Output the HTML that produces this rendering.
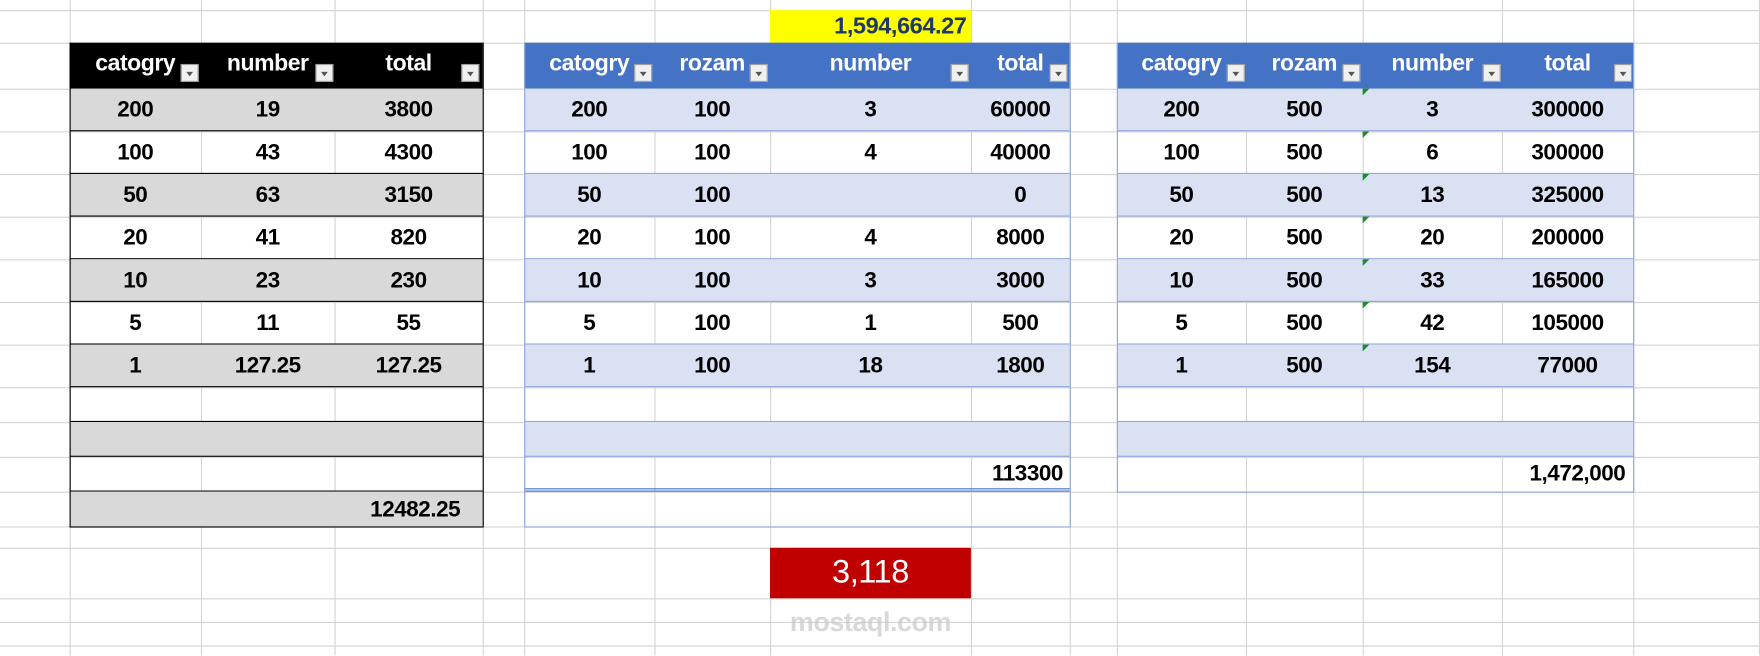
<!DOCTYPE html>
<html><head><meta charset="utf-8"><style>
html,body{margin:0;padding:0;background:#fff;overflow:hidden}
#w{position:absolute;left:0;top:0;width:1568px;height:584px;transform:scale(1.12245);transform-origin:0 0;font-family:"Liberation Sans",sans-serif}
.v{position:absolute;top:0;width:1px;height:584px;background:#d4d4d4}
.h{position:absolute;left:0;width:1568px;height:1px;background:#d4d4d4}
.r{position:absolute;box-sizing:border-box}
.c{position:absolute;display:flex;align-items:center;justify-content:center;font-weight:bold;font-size:20px;color:#000;letter-spacing:-0.4px}
.hd{color:#fff;font-size:20.5px;padding-bottom:3px;box-sizing:border-box}
.f{position:absolute;width:16px;height:16px;background:#f0f0f0;border:1px solid #a0a0a0;box-sizing:border-box}
.f:after{content:"";position:absolute;left:4px;top:6px;border-left:3.5px solid transparent;border-right:3.5px solid transparent;border-top:4px solid #555}
.g{position:absolute;width:0;height:0;border-top:6px solid #1e8c2e;border-right:6px solid transparent}
</style></head><body><div id="w">
<div class="v" style="left:62px"></div><div class="v" style="left:179px"></div><div class="v" style="left:298px"></div><div class="v" style="left:430px"></div><div class="v" style="left:467px"></div><div class="v" style="left:583px"></div><div class="v" style="left:686px"></div><div class="v" style="left:865px"></div><div class="v" style="left:953px"></div><div class="v" style="left:995px"></div><div class="v" style="left:1110px"></div><div class="v" style="left:1214px"></div><div class="v" style="left:1338px"></div><div class="v" style="left:1455px"></div><div class="v" style="left:1567px"></div>
<div class="h" style="top:9px"></div><div class="h" style="top:38px"></div><div class="h" style="top:79px"></div><div class="h" style="top:117px"></div><div class="h" style="top:155px"></div><div class="h" style="top:193px"></div><div class="h" style="top:231px"></div><div class="h" style="top:269px"></div><div class="h" style="top:307px"></div><div class="h" style="top:345px"></div><div class="h" style="top:376px"></div><div class="h" style="top:407px"></div><div class="h" style="top:438px"></div><div class="h" style="top:469px"></div><div class="h" style="top:488px"></div><div class="h" style="top:533px"></div><div class="h" style="top:554px"></div><div class="h" style="top:575px"></div>

<div class="r" style="left:686px;top:9px;width:179px;height:29px;background:#ffff00"></div>
<div class="c" style="left:686px;top:9px;width:175px;height:29px;justify-content:flex-end;color:#203864;font-size:21px">1,594,664.27</div>

<!-- TABLE 1 -->
<div class="r" style="left:62px;top:38px;width:368px;height:41px;background:#000"></div>
<div class="r" style="left:62px;top:79px;width:368px;height:38px;background:#d9d9d9;border-bottom:1px solid #000"></div>
<div class="r" style="left:62px;top:117px;width:368px;height:38px;border-bottom:1px solid #000"></div>
<div class="r" style="left:62px;top:155px;width:368px;height:38px;background:#d9d9d9;border-bottom:1px solid #000"></div>
<div class="r" style="left:62px;top:193px;width:368px;height:38px;border-bottom:1px solid #000"></div>
<div class="r" style="left:62px;top:231px;width:368px;height:38px;background:#d9d9d9;border-bottom:1px solid #000"></div>
<div class="r" style="left:62px;top:269px;width:368px;height:38px;border-bottom:1px solid #000"></div>
<div class="r" style="left:62px;top:307px;width:368px;height:38px;background:#d9d9d9;border-bottom:1px solid #000"></div>
<div class="r" style="left:62px;top:345px;width:368px;height:31px;border-bottom:1px solid #000"></div>
<div class="r" style="left:62px;top:376px;width:368px;height:31px;background:#d9d9d9;border-bottom:1px solid #000"></div>
<div class="r" style="left:62px;top:407px;width:368px;height:31px;border-bottom:1px solid #000"></div>
<div class="r" style="left:62px;top:438px;width:368px;height:32px;background:#d9d9d9;border-bottom:1px solid #000"></div>
<div class="r" style="left:62px;top:38px;width:369px;height:432px;border-left:1px solid #000;border-right:1px solid #000"></div>
<div class="c hd" style="left:62px;top:38px;width:117px;height:41px">catogry</div>
<div class="c hd" style="left:179px;top:38px;width:119px;height:41px">number</div>
<div class="c hd" style="left:298px;top:38px;width:132px;height:41px">total</div>
<div class="f" style="left:161px;top:57px"></div><div class="f" style="left:281px;top:57px"></div><div class="f" style="left:411px;top:57px"></div>
<div class="c" style="left:62px;top:79px;width:117px;height:38px">200</div><div class="c" style="left:179px;top:79px;width:119px;height:38px">19</div><div class="c" style="left:298px;top:79px;width:132px;height:38px">3800</div>
<div class="c" style="left:62px;top:117px;width:117px;height:38px">100</div><div class="c" style="left:179px;top:117px;width:119px;height:38px">43</div><div class="c" style="left:298px;top:117px;width:132px;height:38px">4300</div>
<div class="c" style="left:62px;top:155px;width:117px;height:38px">50</div><div class="c" style="left:179px;top:155px;width:119px;height:38px">63</div><div class="c" style="left:298px;top:155px;width:132px;height:38px">3150</div>
<div class="c" style="left:62px;top:193px;width:117px;height:38px">20</div><div class="c" style="left:179px;top:193px;width:119px;height:38px">41</div><div class="c" style="left:298px;top:193px;width:132px;height:38px">820</div>
<div class="c" style="left:62px;top:231px;width:117px;height:38px">10</div><div class="c" style="left:179px;top:231px;width:119px;height:38px">23</div><div class="c" style="left:298px;top:231px;width:132px;height:38px">230</div>
<div class="c" style="left:62px;top:269px;width:117px;height:38px">5</div><div class="c" style="left:179px;top:269px;width:119px;height:38px">11</div><div class="c" style="left:298px;top:269px;width:132px;height:38px">55</div>
<div class="c" style="left:62px;top:307px;width:117px;height:38px">1</div><div class="c" style="left:179px;top:307px;width:119px;height:38px">127.25</div><div class="c" style="left:298px;top:307px;width:132px;height:38px">127.25</div>
<div class="c" style="left:298px;top:438px;width:112px;height:32px;justify-content:flex-end">12482.25</div>

<!-- TABLE 2 -->
<div class="r" style="left:467px;top:38px;width:486px;height:41px;background:#4472c4"></div>
<div class="r" style="left:467px;top:79px;width:486px;height:38px;background:#d9e1f2;border-bottom:1px solid #8ea9db"></div>
<div class="r" style="left:467px;top:117px;width:486px;height:38px;border-bottom:1px solid #8ea9db"></div>
<div class="r" style="left:467px;top:155px;width:486px;height:38px;background:#d9e1f2;border-bottom:1px solid #8ea9db"></div>
<div class="r" style="left:467px;top:193px;width:486px;height:38px;border-bottom:1px solid #8ea9db"></div>
<div class="r" style="left:467px;top:231px;width:486px;height:38px;background:#d9e1f2;border-bottom:1px solid #8ea9db"></div>
<div class="r" style="left:467px;top:269px;width:486px;height:38px;border-bottom:1px solid #8ea9db"></div>
<div class="r" style="left:467px;top:307px;width:486px;height:38px;background:#d9e1f2;border-bottom:1px solid #8ea9db"></div>
<div class="r" style="left:467px;top:345px;width:486px;height:31px;border-bottom:1px solid #8ea9db"></div>
<div class="r" style="left:467px;top:376px;width:486px;height:31px;background:#d9e1f2;border-bottom:1px solid #8ea9db"></div>
<div class="r" style="left:467px;top:407px;width:486px;height:31px;border-bottom:3px double #4472c4"></div>
<div class="r" style="left:467px;top:438px;width:486px;height:32px;border-bottom:1px solid #8ea9db"></div>
<div class="r" style="left:467px;top:38px;width:487px;height:432px;border-left:1px solid #8ea9db;border-right:1px solid #8ea9db"></div>
<div class="c hd" style="left:467px;top:38px;width:116px;height:41px">catogry</div>
<div class="c hd" style="left:583px;top:38px;width:103px;height:41px">rozam</div>
<div class="c hd" style="left:686px;top:38px;width:179px;height:41px">number</div>
<div class="c hd" style="left:865px;top:38px;width:88px;height:41px">total</div>
<div class="f" style="left:565px;top:57px"></div><div class="f" style="left:668px;top:57px"></div><div class="f" style="left:847px;top:57px"></div><div class="f" style="left:935px;top:57px"></div>
<div class="c" style="left:467px;top:79px;width:116px;height:38px">200</div><div class="c" style="left:583px;top:79px;width:103px;height:38px">100</div><div class="c" style="left:686px;top:79px;width:179px;height:38px">3</div><div class="c" style="left:865px;top:79px;width:88px;height:38px">60000</div>
<div class="c" style="left:467px;top:117px;width:116px;height:38px">100</div><div class="c" style="left:583px;top:117px;width:103px;height:38px">100</div><div class="c" style="left:686px;top:117px;width:179px;height:38px">4</div><div class="c" style="left:865px;top:117px;width:88px;height:38px">40000</div>
<div class="c" style="left:467px;top:155px;width:116px;height:38px">50</div><div class="c" style="left:583px;top:155px;width:103px;height:38px">100</div><div class="c" style="left:865px;top:155px;width:88px;height:38px">0</div>
<div class="c" style="left:467px;top:193px;width:116px;height:38px">20</div><div class="c" style="left:583px;top:193px;width:103px;height:38px">100</div><div class="c" style="left:686px;top:193px;width:179px;height:38px">4</div><div class="c" style="left:865px;top:193px;width:88px;height:38px">8000</div>
<div class="c" style="left:467px;top:231px;width:116px;height:38px">10</div><div class="c" style="left:583px;top:231px;width:103px;height:38px">100</div><div class="c" style="left:686px;top:231px;width:179px;height:38px">3</div><div class="c" style="left:865px;top:231px;width:88px;height:38px">3000</div>
<div class="c" style="left:467px;top:269px;width:116px;height:38px">5</div><div class="c" style="left:583px;top:269px;width:103px;height:38px">100</div><div class="c" style="left:686px;top:269px;width:179px;height:38px">1</div><div class="c" style="left:865px;top:269px;width:88px;height:38px">500</div>
<div class="c" style="left:467px;top:307px;width:116px;height:38px">1</div><div class="c" style="left:583px;top:307px;width:103px;height:38px">100</div><div class="c" style="left:686px;top:307px;width:179px;height:38px">18</div><div class="c" style="left:865px;top:307px;width:88px;height:38px">1800</div>
<div class="c" style="left:855px;top:407px;width:92px;height:31px;justify-content:flex-end">113300</div>

<!-- TABLE 3 -->
<div class="r" style="left:995px;top:38px;width:460px;height:41px;background:#4472c4"></div>
<div class="r" style="left:995px;top:79px;width:460px;height:38px;background:#d9e1f2;border-bottom:1px solid #8ea9db"></div>
<div class="r" style="left:995px;top:117px;width:460px;height:38px;border-bottom:1px solid #8ea9db"></div>
<div class="r" style="left:995px;top:155px;width:460px;height:38px;background:#d9e1f2;border-bottom:1px solid #8ea9db"></div>
<div class="r" style="left:995px;top:193px;width:460px;height:38px;border-bottom:1px solid #8ea9db"></div>
<div class="r" style="left:995px;top:231px;width:460px;height:38px;background:#d9e1f2;border-bottom:1px solid #8ea9db"></div>
<div class="r" style="left:995px;top:269px;width:460px;height:38px;border-bottom:1px solid #8ea9db"></div>
<div class="r" style="left:995px;top:307px;width:460px;height:38px;background:#d9e1f2;border-bottom:1px solid #8ea9db"></div>
<div class="r" style="left:995px;top:345px;width:460px;height:31px;border-bottom:1px solid #8ea9db"></div>
<div class="r" style="left:995px;top:376px;width:460px;height:31px;background:#d9e1f2;border-bottom:1px solid #8ea9db"></div>
<div class="r" style="left:995px;top:407px;width:460px;height:32px;border-bottom:1px solid #8ea9db"></div>
<div class="r" style="left:995px;top:38px;width:461px;height:401px;border-left:1px solid #8ea9db;border-right:1px solid #8ea9db"></div>
<div class="c hd" style="left:995px;top:38px;width:115px;height:41px">catogry</div>
<div class="c hd" style="left:1110px;top:38px;width:104px;height:41px">rozam</div>
<div class="c hd" style="left:1214px;top:38px;width:124px;height:41px">number</div>
<div class="c hd" style="left:1338px;top:38px;width:117px;height:41px">total</div>
<div class="f" style="left:1093px;top:57px"></div><div class="f" style="left:1196px;top:57px"></div><div class="f" style="left:1321px;top:57px"></div><div class="f" style="left:1438px;top:57px"></div>
<div class="g" style="left:1214px;top:79px"></div><div class="g" style="left:1214px;top:117px"></div><div class="g" style="left:1214px;top:155px"></div><div class="g" style="left:1214px;top:193px"></div><div class="g" style="left:1214px;top:231px"></div><div class="g" style="left:1214px;top:269px"></div><div class="g" style="left:1214px;top:307px"></div>
<div class="c" style="left:995px;top:79px;width:115px;height:38px">200</div><div class="c" style="left:1110px;top:79px;width:104px;height:38px">500</div><div class="c" style="left:1214px;top:79px;width:124px;height:38px">3</div><div class="c" style="left:1338px;top:79px;width:117px;height:38px">300000</div>
<div class="c" style="left:995px;top:117px;width:115px;height:38px">100</div><div class="c" style="left:1110px;top:117px;width:104px;height:38px">500</div><div class="c" style="left:1214px;top:117px;width:124px;height:38px">6</div><div class="c" style="left:1338px;top:117px;width:117px;height:38px">300000</div>
<div class="c" style="left:995px;top:155px;width:115px;height:38px">50</div><div class="c" style="left:1110px;top:155px;width:104px;height:38px">500</div><div class="c" style="left:1214px;top:155px;width:124px;height:38px">13</div><div class="c" style="left:1338px;top:155px;width:117px;height:38px">325000</div>
<div class="c" style="left:995px;top:193px;width:115px;height:38px">20</div><div class="c" style="left:1110px;top:193px;width:104px;height:38px">500</div><div class="c" style="left:1214px;top:193px;width:124px;height:38px">20</div><div class="c" style="left:1338px;top:193px;width:117px;height:38px">200000</div>
<div class="c" style="left:995px;top:231px;width:115px;height:38px">10</div><div class="c" style="left:1110px;top:231px;width:104px;height:38px">500</div><div class="c" style="left:1214px;top:231px;width:124px;height:38px">33</div><div class="c" style="left:1338px;top:231px;width:117px;height:38px">165000</div>
<div class="c" style="left:995px;top:269px;width:115px;height:38px">5</div><div class="c" style="left:1110px;top:269px;width:104px;height:38px">500</div><div class="c" style="left:1214px;top:269px;width:124px;height:38px">42</div><div class="c" style="left:1338px;top:269px;width:117px;height:38px">105000</div>
<div class="c" style="left:995px;top:307px;width:115px;height:38px">1</div><div class="c" style="left:1110px;top:307px;width:104px;height:38px">500</div><div class="c" style="left:1214px;top:307px;width:124px;height:38px">154</div><div class="c" style="left:1338px;top:307px;width:117px;height:38px">77000</div>
<div class="c" style="left:1318px;top:407px;width:130px;height:31px;justify-content:flex-end">1,472,000</div>

<div class="r" style="left:686px;top:488px;width:179px;height:45px;background:#c00000"></div>
<div class="c" style="left:686px;top:488px;width:179px;height:45px;color:#fff;font-weight:normal;font-size:29px">3,118</div>
<div class="c" style="left:686px;top:538px;width:179px;height:34px;color:rgba(200,200,200,0.7);font-size:24px">mostaql.com</div>
</div></body></html>
